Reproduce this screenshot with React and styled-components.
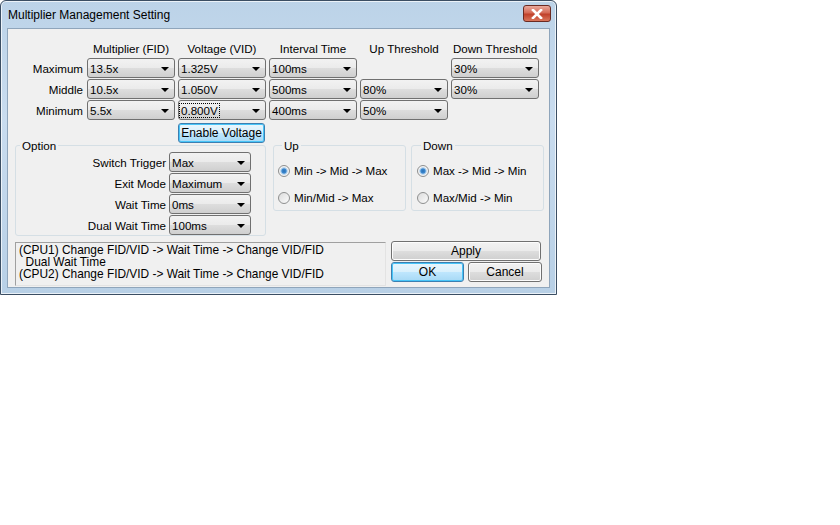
import React from 'react';
import styled, { createGlobalStyle } from 'styled-components';

const GlobalStyle = createGlobalStyle`
  body {
    margin: 0;
    background: #fff;
    font-family: "Liberation Sans", Arial, sans-serif;
  }
`;

const Window = styled.div`
  width: 557px;
  height: 295px;
  box-sizing: border-box;
  display: flex;
  flex-direction: column;
  border: 1px solid #3b4e63;
  border-radius: 6px 6px 0 0;
  background: linear-gradient(180deg, #bcd3e8 0%, #c9dcef 40%, #b8d0e6 100%);
  box-shadow: inset 0 0 0 1px rgba(255, 255, 255, 0.7);
`;

const TitleBar = styled.div`
  height: 27px;
  display: flex;
  align-items: center;
  justify-content: space-between;
  padding: 0 5px 0 7px;
  font-size: 12px;
  color: #000;
`;

const CloseButton = styled.div`
  width: 28px;
  height: 17px;
  margin-top: -2px;
  box-sizing: border-box;
  border: 1px solid #6b2a22;
  border-radius: 3px;
  background: linear-gradient(180deg, #e9a99c 0%, #d56a56 45%, #c0412b 55%, #d9765c 100%);
  display: flex;
  align-items: center;
  justify-content: center;
`;

const Client = styled.div`
  flex: 1;
  margin: 0 6px 6px 6px;
  background: #f0f0f0;
  border: 1px solid #8fa5bb;
  font-size: 11.6px;
`;

const Table = styled.div`
  display: grid;
  grid-template-columns: 76px repeat(5, 88px);
  grid-template-rows: 17px;
  column-gap: 3px;
  row-gap: 1px;
  grid-auto-rows: 20px;
  margin-top: 11px;
`;

const Header = styled.div`
  text-align: center;
  align-self: center;
  color: #000;
`;

const RowLabel = styled.div`
  text-align: right;
  align-self: center;
  padding-right: 1px;
`;

const ComboBox = styled.div`
  position: relative;
  box-sizing: border-box;
  width: ${p => p.$w || 88}px;
  height: 20px;
  border: 1px solid #707070;
  border-radius: 3px;
  background: linear-gradient(180deg, #f2f2f2 0%, #ebebeb 48%, #dddddd 52%, #cfcfcf 100%);
  display: flex;
  align-items: center;
  padding-left: 1px;
  color: #000;
  &::after {
    content: '';
    position: absolute;
    right: 5px;
    top: 8px;
    border-left: 4px solid transparent;
    border-right: 4px solid transparent;
    border-top: 4px solid #000;
  }
`;

const ComboText = styled.span`
  padding: 0 1px;
  line-height: 13px;
  outline: ${p => (p.$focus ? '1px dotted #000' : 'none')};
`;

const PushButton = styled.div`
  box-sizing: border-box;
  height: ${p => p.$h || 20}px;
  width: ${p => p.$w}px;
  margin-top: ${p => p.$mt || 0}px;
  border: 1px solid ${p => (p.$default ? '#3c7fb1' : '#707070')};
  border-radius: 3px;
  background: ${p =>
    p.$default
      ? 'linear-gradient(180deg, #eaf6fd 0%, #d9f0fc 48%, #bee6fd 52%, #a7d9f5 100%)'
      : 'linear-gradient(180deg, #f2f2f2 0%, #ebebeb 48%, #dddddd 52%, #cfcfcf 100%)'};
  box-shadow: ${p => (p.$default ? 'inset 0 0 0 1px #48c5f8' : 'inset 0 0 0 1px #fcfcfc')};
  font-size: 12px;
  display: flex;
  align-items: center;
  justify-content: center;
  color: #000;
`;

const Lower = styled.div`
  display: flex;
  align-items: flex-start;
  margin-top: -2px;
  padding-left: 7px;
`;

const GroupBox = styled.fieldset`
  margin: 0 ${p => p.$mr || 0}px 0 0;
  padding: ${p => p.$pad};
  width: ${p => p.$w}px;
  height: ${p => p.$h}px;
  box-sizing: border-box;
  border: 1px solid #d5dfe5;
  border-radius: 3px;
  & > legend {
    padding: 0 2px;
    margin-left: 4px;
    color: #000;
  }
`;

const OptionGrid = styled.div`
  display: grid;
  grid-template-columns: 150px 82px;
  column-gap: 3px;
  row-gap: 1px;
  grid-auto-rows: 20px;
  margin-top: 0;
`;

const OptionLabel = styled.div`
  text-align: right;
  align-self: center;
`;

const RadioList = styled.div`
  display: flex;
  flex-direction: column;
  gap: 14px;
  padding-top: 12px;
`;

const RadioRow = styled.div`
  display: flex;
  align-items: center;
  gap: 4px;
  height: 13px;
`;

const RadioDot = styled.span`
  width: 12px;
  height: 12px;
  box-sizing: border-box;
  border-radius: 50%;
  border: 1px solid #8e8f8f;
  background: ${p =>
    p.$on
      ? 'radial-gradient(circle, #2a6fb5 0%, #3c88cf 30%, #9fc6e9 42%, #f3f3f3 60%)'
      : 'linear-gradient(135deg, #dcdcdc, #fbfbfb)'};
`;

const Bottom = styled.div`
  display: flex;
  padding-left: 7px;
  margin-top: 6px;
  gap: 5px;
`;

const InfoBox = styled.div`
  width: 371px;
  height: 44px;
  box-sizing: border-box;
  border-top: 1px solid #a0a0a0;
  border-left: 1px solid #a0a0a0;
  border-right: 1px solid #e3e3e3;
  border-bottom: 1px solid #e3e3e3;
  font-size: 11.9px;
  line-height: 12px;
  padding: 1px 3px;
  white-space: pre;
`;

const ButtonColumn = styled.div`
  display: flex;
  flex-direction: column;
  gap: 1px;
  margin-top: -1px;
`;

const ButtonRow = styled.div`
  display: flex;
  gap: 4px;
`;

const columns = ['Multiplier (FID)', 'Voltage (VID)', 'Interval Time', 'Up Threshold', 'Down Threshold'];

const rows = [
  { label: 'Maximum', values: ['13.5x', '1.325V', '100ms', null, '30%'] },
  { label: 'Middle', values: ['10.5x', '1.050V', '500ms', '80%', '30%'] },
  { label: 'Minimum', values: ['5.5x', '0.800V', '400ms', '50%', null] },
];

const options = [
  ['Switch Trigger', 'Max'],
  ['Exit Mode', 'Maximum'],
  ['Wait Time', '0ms'],
  ['Dual Wait Time', '100ms'],
];

const Combo = ({ value, width, focus }) => (
  <ComboBox $w={width}>
    <ComboText $focus={focus}>{value}</ComboText>
  </ComboBox>
);

const Radio = ({ on, children }) => (
  <RadioRow>
    <RadioDot $on={on} />
    {children}
  </RadioRow>
);

export default function App() {
  return (
    <>
      <GlobalStyle />
      <Window>
        <TitleBar>
          <span>Multiplier Management Setting</span>
          <CloseButton>
            <svg width="12" height="10" viewBox="0 0 12 10">
              <path d="M2 1 L10 9 M10 1 L2 9" stroke="#fff" strokeWidth="2.6" strokeLinecap="square" />
            </svg>
          </CloseButton>
        </TitleBar>
        <Client>
          <Table>
            <div />
            {columns.map(c => (
              <Header key={c}>{c}</Header>
            ))}
            {rows.map(r => (
              <React.Fragment key={r.label}>
                <RowLabel>{r.label}</RowLabel>
                {r.values.map((v, i) =>
                  v === null ? (
                    <div key={i} />
                  ) : (
                    <Combo key={i} value={v} focus={r.label === 'Minimum' && i === 1} />
                  )
                )}
              </React.Fragment>
            ))}
            <div />
            <div />
            <PushButton $default $w={87} $mt={2}>Enable Voltage</PushButton>
          </Table>
          <Lower>
            <GroupBox $w={251} $h={97} $pad="0" $mr={7}>
              <legend>Option</legend>
              <OptionGrid>
                {options.map(([label, value]) => (
                  <React.Fragment key={label}>
                    <OptionLabel>{label}</OptionLabel>
                    <Combo value={value} width={82} />
                  </React.Fragment>
                ))}
              </OptionGrid>
            </GroupBox>
            <GroupBox $w={133} $h={72} $pad="0 0 0 4px" $mr={5}>
              <legend>Up</legend>
              <RadioList>
                <Radio on>Min -&gt; Mid -&gt; Max</Radio>
                <Radio>Min/Mid -&gt; Max</Radio>
              </RadioList>
            </GroupBox>
            <GroupBox $w={133} $h={72} $pad="0 0 0 5px">
              <legend>Down</legend>
              <RadioList>
                <Radio on>Max -&gt; Mid -&gt; Min</Radio>
                <Radio>Max/Mid -&gt; Min</Radio>
              </RadioList>
            </GroupBox>
          </Lower>
          <Bottom>
            <InfoBox>
              {'(CPU1) Change FID/VID -> Wait Time -> Change VID/FID\n  Dual Wait Time\n(CPU2) Change FID/VID -> Wait Time -> Change VID/FID'}
            </InfoBox>
            <ButtonColumn>
              <PushButton $w={150}>Apply</PushButton>
              <ButtonRow>
                <PushButton $default $w={73}>OK</PushButton>
                <PushButton $w={74}>Cancel</PushButton>
              </ButtonRow>
            </ButtonColumn>
          </Bottom>
        </Client>
      </Window>
    </>
  );
}
